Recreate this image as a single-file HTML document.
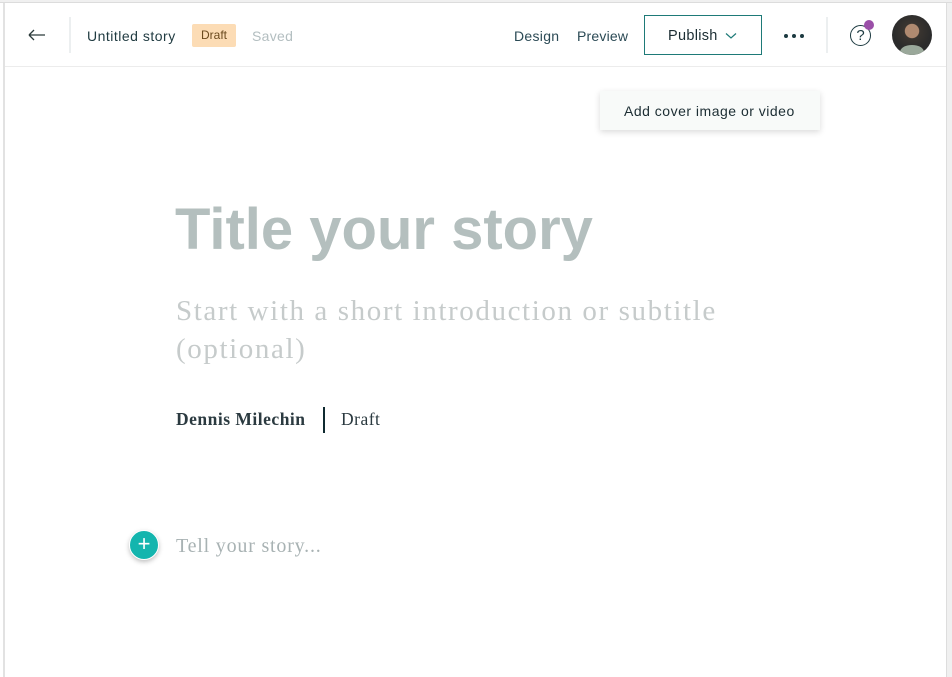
<!DOCTYPE html>
<html><head><meta charset="utf-8"><style>
*{margin:0;padding:0;box-sizing:border-box}
body{width:952px;height:677px;overflow:hidden;background:#fff;font-family:"Liberation Sans",sans-serif;position:relative}
.a{position:absolute;white-space:nowrap}
</style></head><body>
<div class="a" style="left:0;top:0;width:952px;height:3px;background:#f0f0f0;border-bottom:1px solid #dcdcdc"></div>
<div class="a" style="left:3px;top:3px;width:2px;height:674px;background:#e2e2e2"></div>
<div class="a" style="left:946px;top:3px;width:6px;height:674px;background:#f0f0f0;border-left:1px solid #ddd"></div>
<div class="a" style="left:5px;top:66px;width:941px;height:1px;background:#ececec"></div>
<svg class="a" style="left:28px;top:28px" width="18" height="14" viewBox="0 0 18 14"><path d="M1 7H17M1 7L6 2M1 7L6 12" stroke="#2b3a3a" stroke-width="1.3" fill="none"/></svg>
<div class="a" style="left:69px;top:17px;width:2px;height:36px;background:#eceff0"></div>
<div class="a" style="left:87px;top:28px;font-size:14px;color:#1f3a40;letter-spacing:0.5px">Untitled story</div>
<div class="a" style="left:192px;top:24px;width:44px;height:23px;background:#fcdcb5;border-radius:2px;font-size:12px;color:#6b4a1e;text-align:center;line-height:23px">Draft</div>
<div class="a" style="left:252px;top:28px;font-size:14px;color:#b3bec0;letter-spacing:0.3px">Saved</div>
<div class="a" style="left:514px;top:28px;font-size:14px;color:#2b4a55;letter-spacing:0.3px">Design</div>
<div class="a" style="left:577px;top:28px;font-size:14px;color:#2b4a55;letter-spacing:0.2px">Preview</div>
<div class="a" style="left:644px;top:15px;width:118px;height:40px;border:1.5px solid #1e7a78"></div>
<div class="a" style="left:668px;top:28px;font-size:14.5px;color:#1c2d33;letter-spacing:0.3px">Publish</div>
<svg class="a" style="left:725px;top:32px" width="12" height="8" viewBox="0 0 12 8"><path d="M1 1.5L6 6L11 1.5" stroke="#1e7a78" stroke-width="1.2" fill="none"/></svg>
<div class="a" style="left:784px;top:34px;width:4px;height:4px;border-radius:50%;background:#1c3a40"></div>
<div class="a" style="left:792px;top:34px;width:4px;height:4px;border-radius:50%;background:#1c3a40"></div>
<div class="a" style="left:800px;top:34px;width:4px;height:4px;border-radius:50%;background:#1c3a40"></div>
<div class="a" style="left:826px;top:17px;width:2px;height:36px;background:#eceff0"></div>
<div class="a" style="left:850px;top:25px;width:21px;height:21px;border:1.3px solid #1c3a40;border-radius:50%;font-size:15px;text-align:center;line-height:19px;color:#1c3a40">?</div>
<div class="a" style="left:864px;top:20px;width:10px;height:10px;border-radius:50%;background:#9b4fa8"></div>
<div class="a" style="left:892px;top:15px;width:40px;height:40px;border-radius:50%;background:radial-gradient(circle at 50% 40%,#b08a70 0 22%,#3a3530 24%,#2b2b2b 60%);overflow:hidden"><div style="position:absolute;left:8px;top:30px;width:24px;height:14px;border-radius:50%;background:#9aa89a"></div></div>
<div class="a" style="left:600px;top:91px;width:220px;height:39px;background:#f8faf9;box-shadow:0 2px 6px rgba(0,0,0,.15);font-size:14px;color:#1c2d33;line-height:41px;padding-left:24px;letter-spacing:0.5px">Add cover image or video</div>
<div class="a" style="left:175px;top:196px;font-size:58px;font-weight:bold;color:#b4bfbe;letter-spacing:0">Title your story</div>
<div class="a" style="left:176px;top:292px;font-size:29px;line-height:38px;color:#c6cbcb;font-family:'Liberation Serif',serif;letter-spacing:1.6px">Start with a short introduction or subtitle<br>(optional)</div>
<div class="a" style="left:176px;top:409px;font-size:17.5px;font-weight:bold;color:#2b3a40;font-family:'Liberation Serif',serif;letter-spacing:0.5px">Dennis Milechin</div>
<div class="a" style="left:323px;top:407px;width:2px;height:26px;background:#0f2a30"></div>
<div class="a" style="left:341px;top:409px;font-size:17.5px;color:#2b3a40;font-family:'Liberation Serif',serif;letter-spacing:0.5px">Draft</div>
<div class="a" style="left:129px;top:530px;width:30px;height:30px;border-radius:50%;background:#14b5ae;border:1.5px solid #fff;box-shadow:0 2px 5px rgba(0,0,0,.25);color:#fff;font-size:22px;text-align:center;line-height:26px">+</div>
<div class="a" style="left:176px;top:535px;font-size:20px;color:#a8b2b3;font-family:'Liberation Serif',serif;letter-spacing:0.8px">Tell your story...</div>
</body></html>
